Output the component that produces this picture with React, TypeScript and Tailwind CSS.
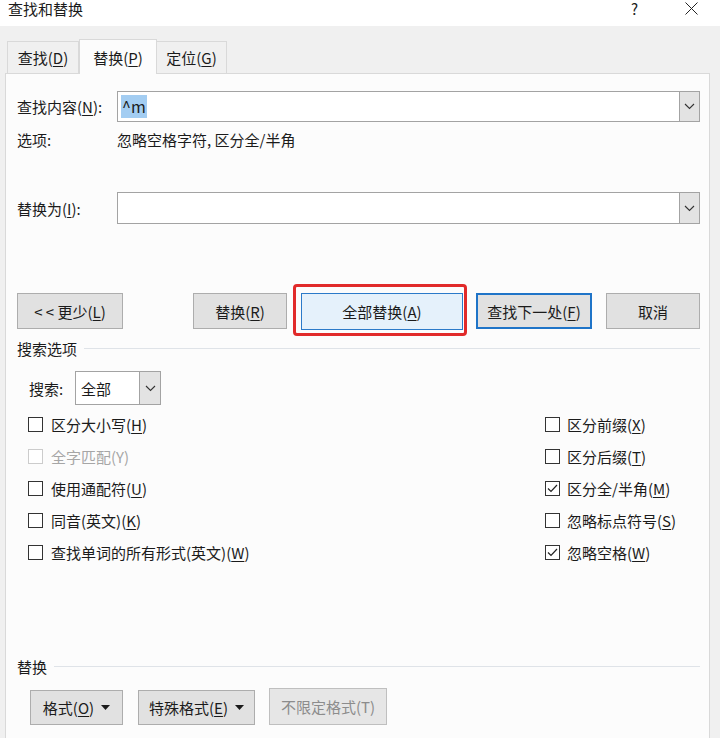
import React from "react";

const leftOptions = [
  { label: "区分大小写", key: "H", checked: false, disabled: false },
  { label: "全字匹配", key: "Y", checked: false, disabled: true },
  { label: "使用通配符", key: "U", checked: false, disabled: false },
  { label: "同音(英文)", key: "K", checked: false, disabled: false },
  { label: "查找单词的所有形式(英文)", key: "W", checked: false, disabled: false },
];

const rightOptions = [
  { label: "区分前缀", key: "X", checked: false },
  { label: "区分后缀", key: "T", checked: false },
  { label: "区分全/半角", key: "M", checked: true },
  { label: "忽略标点符号", key: "S", checked: false },
  { label: "忽略空格", key: "W", checked: true },
];

function Key({ k, underline = true }: { k: string; underline?: boolean }) {
  return (
    <span>
      (<span className={underline ? "underline underline-offset-2" : ""}>{k}</span>)
    </span>
  );
}

function Chevron() {
  return (
    <svg width="11" height="7" viewBox="0 0 11 7" fill="none">
      <path d="M1 1 L5.5 5.5 L10 1" stroke="#333" strokeWidth="1.1" />
    </svg>
  );
}

function Caret() {
  return (
    <svg width="9" height="5" viewBox="0 0 9 5" className="ml-[7px]">
      <path d="M0 0 H9 L4.5 5 Z" fill="#1b1b1b" />
    </svg>
  );
}

function Checkbox({ checked, disabled }: { checked?: boolean; disabled?: boolean }) {
  return (
    <div
      className={`w-[15px] h-[15px] border flex items-center justify-center bg-white ${
        disabled ? "border-[#cccccc]" : "border-[#333333]"
      }`}
    >
      {checked && (
        <svg width="11" height="9" viewBox="0 0 11 9" fill="none">
          <path d="M1 4.5 L4 7.5 L10 1" stroke="#222" strokeWidth="1.2" />
        </svg>
      )}
    </div>
  );
}

function Combo({ children }: { children?: React.ReactNode }) {
  return (
    <div className="flex-1 h-full flex border border-[#a3a3a3] bg-white">
      <div className="flex-1 flex items-center pl-[3px]">{children}</div>
      <div className="w-[21px] -my-[1px] -mr-[1px] border border-[#a3a3a3] bg-[#e3e3e3] flex items-center justify-center">
        <Chevron />
      </div>
    </div>
  );
}

function SectionHeader({ title }: { title: string }) {
  return (
    <div className="h-[24px] flex items-center">
      <span className="leading-none">{title}</span>
      <div className="flex-1 h-px bg-[#dfe3e8] ml-[7px]" />
    </div>
  );
}

export default function App() {
  return (
    <div className="w-[720px] h-[738px] overflow-hidden bg-[#f0f0f0] text-[15px] text-[#1b1b1b] font-['Noto_Sans_CJK_SC','Noto_Sans',sans-serif]">
      {/* title bar */}
      <div className="h-[26px] bg-white flex items-start">
        <div className="h-[16px] flex items-center pl-[8px] text-[15px] leading-none flex-1">查找和替换</div>
        <div className="h-[16px] flex items-center text-[15px] leading-none mr-[47px]">?</div>
        <div className="h-[16px] flex items-center mr-[22px]">
          <svg width="13" height="13" viewBox="0 0 13 13" fill="none">
            <path d="M0.5 0.5 L12.5 12.5 M12.5 0.5 L0.5 12.5" stroke="#222" strokeWidth="1" />
          </svg>
        </div>
      </div>

      {/* tabs */}
      <div className="flex items-end pl-[7px] pt-[13px]">
        <div className="w-[72px] h-[32px] border border-b-0 border-[#d9d9d9] bg-[#f0f0f0] flex items-center justify-center leading-none">
          查找<Key k="D" />
        </div>
        <div className="relative z-10 -mb-px w-[78px] h-[35px] border border-b-0 border-[#d9d9d9] bg-[#fcfcfc] flex items-center justify-center leading-none">
          替换<Key k="P" />
        </div>
        <div className="w-[70px] h-[32px] border border-b-0 border-l-0 border-[#d9d9d9] bg-[#f0f0f0] flex items-center justify-center leading-none">
          定位<Key k="G" />
        </div>
      </div>

      {/* panel */}
      <div className="ml-[5px] w-[705px] h-[700px] border border-[#d9d9d9] bg-[#fcfcfc] pl-[11px] pr-[9px] flex flex-col">
        <div className="mt-[17px] h-[31px] flex items-center">
          <div className="w-[100px] leading-none">
            查找内容<Key k="N" />:
          </div>
          <Combo>
            <span className="bg-[#a3cdf2] text-[16px] leading-[21px] px-[1px] py-[1px]">^m</span>
          </Combo>
        </div>
        <div className="h-[34px] flex items-center leading-none">
          <div className="w-[100px]">选项:</div>
          <div>忽略空格字符, 区分全/半角</div>
        </div>
        <div className="h-[36px]" />
        <div className="h-[32px] flex items-center">
          <div className="w-[100px] leading-none">
            替换为<Key k="I" />:
          </div>
          <Combo />
        </div>
        <div className="h-[60px]" />

        {/* action buttons */}
        <div className="h-[52px] flex items-start pt-[9px]">
          <button className="w-[106px] h-[36px] border border-[#adadad] bg-[#e1e1e1] flex items-center justify-center leading-none">
            &lt; &lt; 更少<Key k="L" />
          </button>
          <button className="ml-[70px] w-[94px] h-[36px] border border-[#adadad] bg-[#e1e1e1] flex items-center justify-center leading-none">
            替换<Key k="R" />
          </button>
          <div className="relative ml-[14px]">
            <button className="w-[162px] h-[37px] border border-[#2b7ac9] bg-[#e5f1fb] flex items-center justify-center leading-none">
              全部替换<Key k="A" />
            </button>
            <div className="absolute -left-[8px] -right-[4px] -top-[9px] -bottom-[6px] border-[3px] border-[#e12a2a] rounded-[4px] pointer-events-none" />
          </div>
          <button className="ml-[13px] w-[116px] h-[36px] border-2 border-[#1f74c8] bg-[#e1e1e1] flex items-center justify-center leading-none">
            查找下一处<Key k="F" />
          </button>
          <button className="ml-[14px] w-[94px] h-[36px] border border-[#adadad] bg-[#e1e1e1] flex items-center justify-center leading-none">
            取消
          </button>
        </div>

        <SectionHeader title="搜索选项" />

        <div className="mt-[11px] h-[34px] flex items-center pl-[12px]">
          <div className="w-[46px] leading-none">搜索:</div>
          <div className="w-[86px] h-full">
            <div className="h-full flex border border-[#a3a3a3] bg-white">
              <div className="flex-1 flex items-center pl-[5px] leading-none">全部</div>
              <div className="w-[22px] -my-[1px] -mr-[1px] border border-[#a3a3a3] bg-[#e3e3e3] flex items-center justify-center">
                <Chevron />
              </div>
            </div>
          </div>
        </div>

        <div className="mt-[3px] flex">
          <div className="ml-[11px] w-[517px] flex flex-col">
            {leftOptions.map((o) => (
              <div key={o.label} className="h-[32px] flex items-center">
                <Checkbox checked={o.checked} disabled={o.disabled} />
                <span className={`ml-[8px] leading-none ${o.disabled ? "text-[#a6a6a6]" : ""}`}>
                  {o.label}
                  <Key k={o.key} underline={!o.disabled} />
                </span>
              </div>
            ))}
          </div>
          <div className="flex flex-col">
            {rightOptions.map((o) => (
              <div key={o.label} className="h-[32px] flex items-center">
                <Checkbox checked={o.checked} />
                <span className="ml-[7px] leading-none">
                  {o.label}
                  <Key k={o.key} />
                </span>
              </div>
            ))}
          </div>
        </div>

        <div className="h-[86px]" />
        <SectionHeader title="替换" />

        <div className="mt-[12px] flex items-start pl-[13px]">
          <button className="w-[93px] h-[35px] border border-[#adadad] bg-[#e1e1e1] flex items-center justify-center leading-none">
            格式<Key k="O" />
            <Caret />
          </button>
          <button className="ml-[15px] w-[117px] h-[35px] border border-[#adadad] bg-[#e1e1e1] flex items-center justify-center leading-none">
            特殊格式<Key k="E" />
            <Caret />
          </button>
          <button className="ml-[14px] -mt-[2px] w-[118px] h-[37px] border border-[#bfbfbf] bg-[#e6e6e6] text-[#8c8c8c] flex items-center justify-center leading-none">
            不限定格式<Key k="T" underline={false} />
          </button>
        </div>
      </div>
    </div>
  );
}
